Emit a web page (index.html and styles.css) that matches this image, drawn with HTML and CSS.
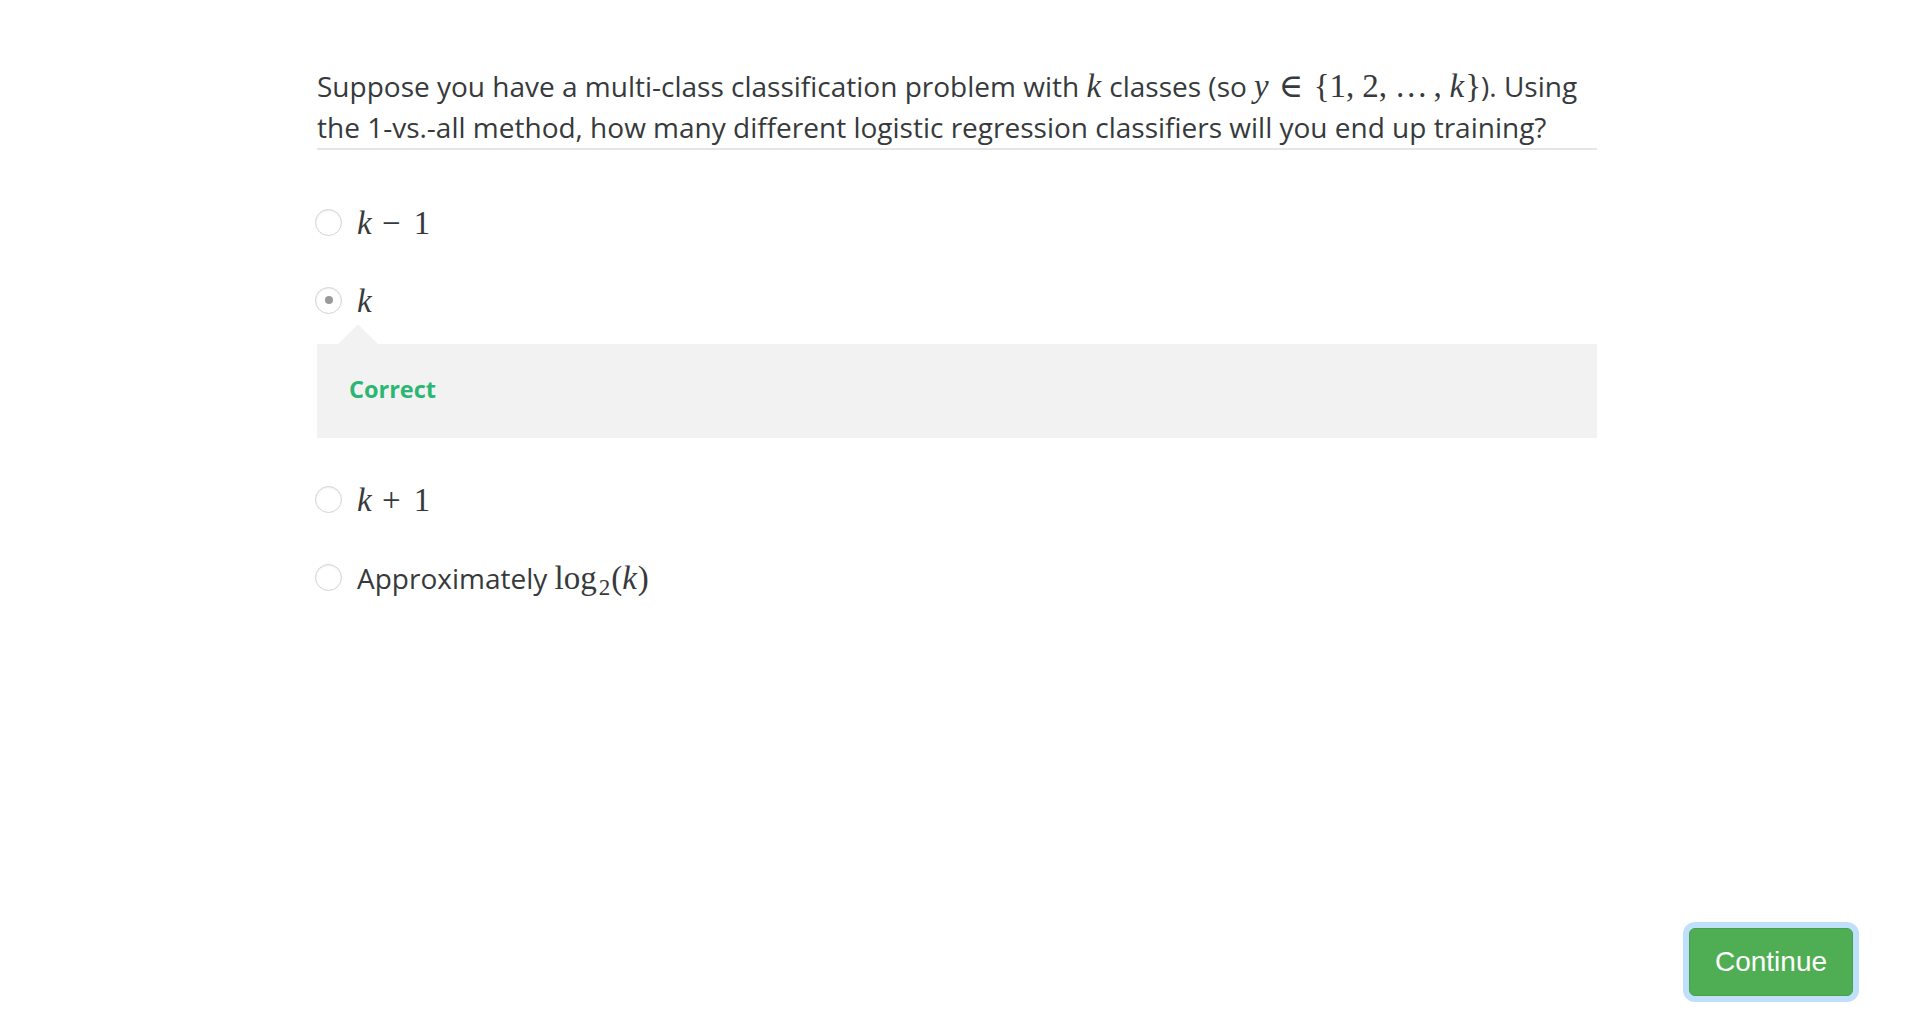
FILE: index.html
```html
<!DOCTYPE html>
<html>
<head>
<meta charset="utf-8">
<link rel="stylesheet" href="styles.css">
</head>
<body>
<div class="page">
  <div class="content">
    <div class="question">Suppose you have a multi-class classification problem with <span class="mi">k</span> classes (so <span class="mi">y</span><span class="mo rel">∈</span><span class="mn">{</span><span class="mn">1</span><span class="mn punct">,</span><span class="mn">2</span><span class="mn punct">,</span><span class="mn dots">…</span><span class="mn punct">,</span><span class="mi">k</span><span class="mn">}</span>). Using the 1-vs.-all method, how many different logistic regression classifiers will you end up training?</div>

    <div class="options">
      <div class="option">
        <span class="radio"></span>
        <span class="label"><span class="mi">k</span><span class="mo bin">−</span><span class="mn">1</span></span>
      </div>
      <div class="option">
        <span class="radio checked"></span>
        <span class="label"><span class="mi">k</span></span>
      </div>
      <div class="feedback">
        <span class="correct">Correct</span>
      </div>
      <div class="option">
        <span class="radio"></span>
        <span class="label"><span class="mi">k</span><span class="mo bin">+</span><span class="mn">1</span></span>
      </div>
      <div class="option">
        <span class="radio"></span>
        <span class="label">Approximately <span class="mn">log</span><sub class="sub">2</sub><span class="mn">(</span><span class="mi">k</span><span class="mn">)</span></span>
      </div>
    </div>
  </div>

  <div class="footer">
    <button class="continue">Continue</button>
  </div>
</div>
</body>
</html>
```

FILE: styles.css
```css
html, body {
  margin: 0;
  padding: 0;
  background: #ffffff;
}

.page {
  height: 1010px;
  display: flex;
  flex-direction: column;
  font-family: "Open Sans", "Noto Sans", sans-serif;
  color: #373a3c;
}

.content {
  width: 1280px;
  margin-left: 317px;
  padding-top: 66px;
}

.question {
  font-size: 28px;
  line-height: 41px;
  border-bottom: 2px solid #e5e5e5;
}

.mi,
.mn,
.mo {
  font-family: "Liberation Serif", "DejaVu Serif", serif;
  font-size: 33px;
  line-height: 1;
}

.mi {
  font-style: italic;
  padding-right: 1px;
}

.mn {
  font-style: normal;
}

.rel {
  margin: 0 0.32em 0 0.27em;
}

.punct {
  margin-right: 0.24em;
}

.dots {
  letter-spacing: 0.05em;
  margin-right: 0.12em;
}

.options {
  display: flex;
  flex-direction: column;
  padding-top: 58px;
}

.option {
  display: flex;
  align-items: center;
  height: 28px;
  margin-bottom: 50px;
  font-size: 28px;
}

.radio {
  width: 27px;
  height: 27px;
  border: 1px solid #d3d3d3;
  border-radius: 50%;
  box-sizing: border-box;
  box-shadow: inset 0 1px 2px rgba(0, 0, 0, 0.07);
  margin-left: -2px;
  margin-right: 15px;
  flex-shrink: 0;
  display: flex;
  align-items: center;
  justify-content: center;
}

.radio.checked::after {
  content: "";
  width: 8px;
  height: 8px;
  border-radius: 50%;
  background: #9a9a9a;
}

.label {
  line-height: 28px;
  position: relative;
  top: 1px;
  white-space: nowrap;
}

.bin {
  margin: 0 0.4em 0 0.28em;
}

.sub {
  font-family: "Liberation Serif", "DejaVu Serif", serif;
  font-size: 23px;
  vertical-align: -0.3em;
  line-height: 0;
  margin: 0 1px 0 2px;
}

.feedback {
  position: relative;
  background: #f2f2f2;
  height: 94px;
  margin-top: -20px;
  margin-bottom: 47px;
  display: flex;
  align-items: center;
  padding-left: 32px;
  padding-bottom: 4px;
  box-sizing: border-box;
}

.feedback::before {
  content: "";
  position: absolute;
  left: 27px;
  top: -14px;
  width: 28px;
  height: 28px;
  background: #f2f2f2;
  transform: rotate(45deg);
}

.correct {
  position: relative;
  font-weight: 700;
  font-size: 23.5px;
  color: #2bb673;
}

.footer {
  margin-top: auto;
  display: flex;
  justify-content: flex-end;
  padding-right: 57px;
  padding-bottom: 14px;
}

.continue {
  width: 164px;
  height: 68px;
  background: #4fae53;
  border: 1px solid #47a04b;
  border-radius: 6px;
  color: #ffffff;
  font-family: "Liberation Sans", Arial, sans-serif;
  font-size: 28px;
  padding: 0;
  box-shadow: 0 0 0 6px #c0dffb;
  cursor: pointer;
}
```
